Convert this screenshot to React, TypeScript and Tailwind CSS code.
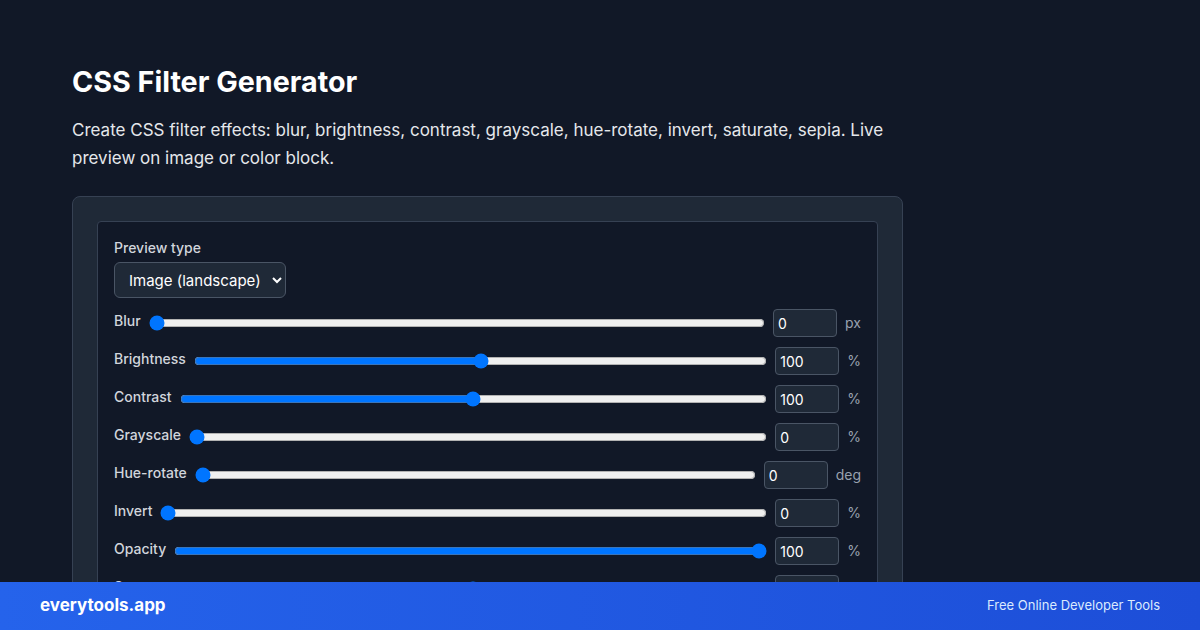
import { useState } from 'react';

type Filter = {
    key: string;
    label: string;
    min: number;
    max: number;
    value: number;
    unit: string;
};

const initialFilters: Filter[] = [
    { key: 'blur', label: 'Blur', min: 0, max: 20, value: 0, unit: 'px' },
    { key: 'brightness', label: 'Brightness', min: 0, max: 200, value: 100, unit: '%' },
    { key: 'contrast', label: 'Contrast', min: 0, max: 200, value: 100, unit: '%' },
    { key: 'grayscale', label: 'Grayscale', min: 0, max: 100, value: 0, unit: '%' },
    { key: 'hue', label: 'Hue-rotate', min: 0, max: 360, value: 0, unit: 'deg' },
    { key: 'invert', label: 'Invert', min: 0, max: 100, value: 0, unit: '%' },
    { key: 'opacity', label: 'Opacity', min: 0, max: 100, value: 100, unit: '%' },
    { key: 'saturate', label: 'Saturate', min: 0, max: 200, value: 100, unit: '%' },
    { key: 'sepia', label: 'Sepia', min: 0, max: 100, value: 0, unit: '%' },
];

export default function App() {
    const [filters, setFilters] = useState(initialFilters);
    const [previewType, setPreviewType] = useState('image');

    function update(key: string, value: number) {
        setFilters(fs => fs.map(f => (f.key === key ? { ...f, value } : f)));
    }

    return (
        <div className="h-screen overflow-hidden bg-[#111827] text-white font-['Inter',sans-serif]">
            <div className="px-[72px] pt-16 pb-24">
                <div className="w-[831px]">
                    <h1 className="text-[28.7px] leading-9 font-bold mb-4">CSS Filter Generator</h1>
                    <p className="text-[17px] leading-7 text-gray-200 mb-6">
                        Create CSS filter effects: blur, brightness, contrast, grayscale, hue-rotate, invert, saturate, sepia. Live preview on image or color block.
                    </p>

                    <div className="bg-[#1f2937] border border-gray-700 rounded-lg p-6">
                        <div className="bg-[#111827] border border-gray-700 rounded p-4">
                            <label className="block text-sm font-medium text-gray-300 mb-1">Preview type</label>
                            <select
                                className="w-[172px] bg-[#1f2937] border border-gray-600 rounded-md pl-2.5 pr-1.5 h-9 text-[15px] text-white"
                                value={previewType}
                                onChange={e => setPreviewType(e.target.value)}
                            >
                                <option value="image">Image (landscape)</option>
                                <option value="color">Color block</option>
                            </select>

                            <div className="mt-[11px] space-y-2.5">
                                {filters.map(f => (
                                    <div key={f.key} className="flex items-center gap-2">
                                        <span className="text-sm font-medium text-gray-300 -mt-1">{f.label}</span>
                                        <input
                                            type="range"
                                            className="flex-1"
                                            min={f.min}
                                            max={f.max}
                                            value={f.value}
                                            onChange={e => update(f.key, Number(e.target.value))}
                                        />
                                        <input
                                            type="number"
                                            className="w-16 h-7 bg-[#1f2937] border border-gray-600 rounded px-1 text-sm text-white"
                                            value={f.value}
                                            onChange={e => update(f.key, Number(e.target.value))}
                                        />
                                        <span className="text-sm text-gray-400">{f.unit}</span>
                                    </div>
                                ))}
                            </div>
                        </div>
                    </div>
                </div>
            </div>

            <footer className="fixed bottom-0 left-0 right-0 h-12 px-10 flex items-center justify-between bg-gradient-to-r from-[#2563eb] to-[#1d4ed8]">
                <span className="text-[17px] font-bold text-white">everytools.app</span>
                <span className="text-[13px] text-blue-100">Free Online Developer Tools</span>
            </footer>
        </div>
    );
}
